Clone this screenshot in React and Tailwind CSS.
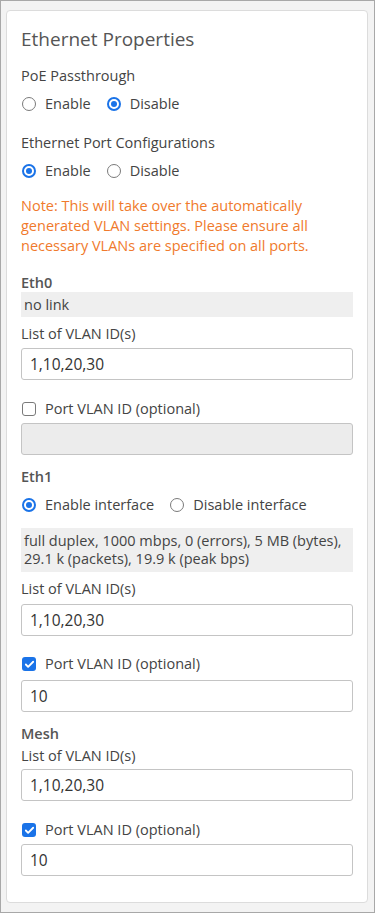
import React from 'react';
import { Check } from 'lucide-react';

const font = { fontFamily: '"Open Sans", "Liberation Sans", sans-serif' };

function Radio({ checked, label }) {
    return (
        <label className="flex items-center">
            {checked ? (
                <span className="w-[14px] h-[14px] rounded-full border-[2px] border-[#1a73e8] flex items-center justify-center">
                    <span className="w-[6px] h-[6px] rounded-full bg-[#1a73e8]" />
                </span>
            ) : (
                <span className="w-[14px] h-[14px] rounded-full border border-[#7a7a7a] bg-white" />
            )}
            <span className="ml-[9px]">{label}</span>
        </label>
    );
}

function Checkbox({ checked, label }) {
    return (
        <label className="flex items-center">
            {checked ? (
                <span className="w-[14px] h-[14px] rounded-[3px] bg-[#1a73e8] flex items-center justify-center">
                    <Check className="w-[11px] h-[11px] text-white" strokeWidth={4} />
                </span>
            ) : (
                <span className="w-[14px] h-[14px] rounded-[3px] border border-[#7a7a7a] bg-white" />
            )}
            <span className="ml-[9px]">{label}</span>
        </label>
    );
}

function TextInput({ value, disabled }) {
    return (
        <div
            className={`h-[32px] border border-[#c4c4c4] rounded-[3px] flex items-center pl-[8px] text-[15.5px] text-[#333] ${
                disabled ? 'bg-[#ececec]' : 'bg-white'
            }`}
        >
            {value}
        </div>
    );
}

export default function App() {
    return (
        <div
            className="w-[375px] h-[913px] border border-[#a8a8a8] bg-[#f3f3f3] pl-[5px] pr-[6px] pt-[9px]"
            style={font}
        >
            <div className="h-[893px] bg-white border border-[#dcdcdc] rounded-[4px] px-[14px] pt-[14px] text-[14.5px] leading-[20px] text-[#444]">
                <h2 className="text-[19px] leading-[28px] text-[#555]">Ethernet Properties</h2>

                {/* PoE */}
                <div className="mt-[13px]">PoE Passthrough</div>
                <div className="mt-[8px] flex gap-[16px] pl-[1px]">
                    <Radio label="Enable" />
                    <Radio checked label="Disable" />
                </div>

                {/* Port configs */}
                <div className="mt-[19px]">Ethernet Port Configurations</div>
                <div className="mt-[8px] flex gap-[16px] pl-[1px]">
                    <Radio checked label="Enable" />
                    <Radio label="Disable" />
                </div>

                <p className="mt-[15px] text-[#f07a2c]">
                    Note: This will take over the automatically generated VLAN settings. Please ensure all
                    necessary VLANs are specified on all ports.
                </p>

                {/* Eth0 */}
                <div className="mt-[18px] font-semibold leading-[18px] text-[#555]">Eth0</div>
                <div className="h-[25px] bg-[#efefef] px-[3px] flex items-center">no link</div>
                <div className="mt-[7px]">List of VLAN ID(s)</div>
                <div className="mt-[4px]">
                    <TextInput value="1,10,20,30" />
                </div>
                <div className="mt-[19px] pl-[1px]">
                    <Checkbox label="Port VLAN ID (optional)" />
                </div>
                <div className="mt-[4px]">
                    <TextInput value="" disabled />
                </div>

                {/* Eth1 */}
                <div className="mt-[13px] font-semibold leading-[18px] text-[#555]">Eth1</div>
                <div className="mt-[9px] flex gap-[16px] pl-[1px]">
                    <Radio checked label="Enable interface" />
                    <Radio label="Disable interface" />
                </div>
                <div className="mt-[13px] bg-[#efefef] px-[3px] py-[4px] leading-[18px]">
                    full duplex, 1000 mbps, 0 (errors), 5 MB (bytes), 29.1 k (packets), 19.9 k (peak bps)
                </div>
                <div className="mt-[7px]">List of VLAN ID(s)</div>
                <div className="mt-[5px]">
                    <TextInput value="1,10,20,30" />
                </div>
                <div className="mt-[18px] pl-[1px]">
                    <Checkbox checked label="Port VLAN ID (optional)" />
                </div>
                <div className="mt-[6px]">
                    <TextInput value="10" />
                </div>

                {/* Mesh */}
                <div className="mt-[13px] font-semibold leading-[18px] text-[#555]">Mesh</div>
                <div className="mt-[3px]">List of VLAN ID(s)</div>
                <div className="mt-[3px]">
                    <TextInput value="1,10,20,30" />
                </div>
                <div className="mt-[19px] pl-[1px]">
                    <Checkbox checked label="Port VLAN ID (optional)" />
                </div>
                <div className="mt-[4px]">
                    <TextInput value="10" />
                </div>
            </div>
        </div>
    );
}
